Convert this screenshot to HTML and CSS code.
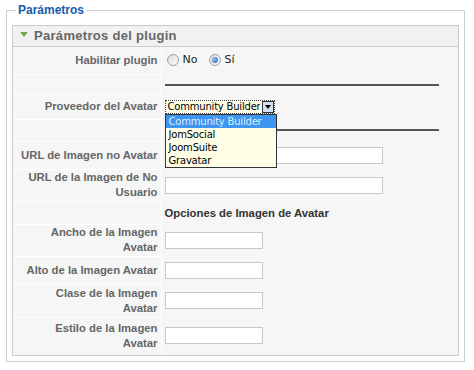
FILE: index.html
```html
<!DOCTYPE html>
<html lang="es">
<head>
  <meta charset="UTF-8" />
  <title>Parámetros</title>
  <link rel="stylesheet" href="styles.css">
</head>
<body>

  <!-- Parametros -->
  <fieldset class="params">
    <legend>Parámetros</legend>

    <div class="panel">
      <h3 class="panel-title"><span class="arrow"></span>Parámetros del plugin</h3>

      <table class="paramlist">
        <tr class="r1">
          <td class="key">Habilitar plugin</td>
          <td class="val">
            <label class="radio"><span class="dot"></span>No</label>
            <label class="radio"><span class="dot on"></span>Sí</label>
          </td>
        </tr>
        <tr class="r2">
          <td class="key"></td>
          <td class="val"><div class="rule"></div></td>
        </tr>
        <tr class="r3">
          <td class="key">Proveedor del Avatar</td>
          <td class="val">
            <div class="combo">
              <div class="combo-box">
                <span class="combo-text">Community Builder</span>
                <span class="combo-btn"></span>
              </div>
              <ul class="combo-list">
                <li class="sel">Community Builder</li>
                <li>JomSocial</li>
                <li>JoomSuite</li>
                <li>Gravatar</li>
              </ul>
            </div>
          </td>
        </tr>
        <tr class="r4">
          <td class="key"></td>
          <td class="val"><div class="rule"></div></td>
        </tr>
        <tr class="r5">
          <td class="key">URL de Imagen no Avatar</td>
          <td class="val"><input type="text" class="text wide" /></td>
        </tr>
        <tr class="r6">
          <td class="key">URL de la Imagen de No Usuario</td>
          <td class="val"><input type="text" class="text wide" /></td>
        </tr>
        <tr class="r7">
          <td class="key"></td>
          <td class="val"><b class="subhead">Opciones de Imagen de Avatar</b></td>
        </tr>
        <tr class="r8">
          <td class="key">Ancho de la Imagen Avatar</td>
          <td class="val"><input type="text" class="text short" /></td>
        </tr>
        <tr class="r9">
          <td class="key">Alto de la Imagen Avatar</td>
          <td class="val"><input type="text" class="text short" /></td>
        </tr>
        <tr class="r10">
          <td class="key">Clase de la Imagen Avatar</td>
          <td class="val"><input type="text" class="text short" /></td>
        </tr>
        <tr class="r11">
          <td class="key">Estilo de la Imagen Avatar</td>
          <td class="val"><input type="text" class="text short" /></td>
        </tr>
      </table>
    </div>
  </fieldset>

</body>
</html>
```

FILE: styles.css
```css
* {
  box-sizing: border-box;
}

body {
  margin: 0;
  background: #fff;
  font-family: "Liberation Sans", Arial, sans-serif;
  font-size: 11px;
  color: #666;
}

/* outer fieldset */
.params {
  margin: 3px 0 0 6px;
  width: 459px;
  height: 359px;
  border: 1px solid #ccc;
  padding: 11px 5px 8px 5px;
  position: relative;
}

.params legend {
  color: #135cae;
  font-weight: bold;
  font-size: 12px;
  padding: 0 2px;
  margin-left: 4px;
  line-height: 14px;
}

/* panel */
.panel {
  border: 1px solid #ccc;
  background: #f6f6f6;
  width: 447px;
  height: 331px;
  margin-top: -3px;
}

.panel-title {
  margin: 0;
  height: 21px;
  line-height: 20px;
  border-bottom: 1px solid #ccc;
  background: #f1f1f1;
  font-size: 13px;
  font-weight: bold;
  color: #666;
  padding-left: 7px;
  letter-spacing: 0.3px;
}

.arrow {
  display: inline-block;
  width: 0;
  height: 0;
  border-left: 4px solid transparent;
  border-right: 4px solid transparent;
  border-top: 5px solid #78a44c;
  margin-right: 6px;
  vertical-align: 3px;
}

/* table */
.paramlist {
  border-collapse: collapse;
  width: 100%;
}

.paramlist td {
  padding: 0;
}

.paramlist td.key {
  width: 148px;
  text-align: right;
  font-weight: bold;
  font-size: 11.3px;
  color: #666;
  padding-right: 3px;
  padding-left: 8px;
  border-bottom: 1px solid #fff;
  border-right: 1px solid #fff;
  line-height: 15px;
  vertical-align: middle;
}

.paramlist td.val {
  padding-left: 3px;
  vertical-align: middle;
}

.r1 { height: 27px; }
.r2 { height: 20px; }
.r3 { height: 25px; }
.r4 { height: 22px; }
.r5 { height: 28px; }
.r6 { height: 32px; }
.r7 { height: 23px; }
.r8 { height: 32px; }
.r9 { height: 28px; }
.r10 { height: 33px; }
.r11 { height: 37px; }
.r11 td.key { border-bottom: none; }

/* radios */
.radio {
  display: inline-flex;
  align-items: center;
  gap: 4px;
  color: #222;
  font-family: Tahoma, "DejaVu Sans", sans-serif;
  font-size: 11px;
  margin-right: 6px;
  margin-left: 2px;
}

.dot {
  width: 12px;
  height: 12px;
  border-radius: 50%;
  border: 1px solid #9aa3ad;
  background: linear-gradient(135deg, #dcdcdc, #fbfbfb);
  position: relative;
}

.dot.on::after {
  content: "";
  position: absolute;
  left: 2px;
  top: 2px;
  width: 6px;
  height: 6px;
  border-radius: 50%;
  background: radial-gradient(circle at 35% 35%, #8fc2f0, #2163a8);
}

.rule {
  height: 2px;
  width: 274px;
  background: #555;
  margin-top: 1px;
}

.r4 .rule {
  margin-top: -1px;
}

/* combo box */
.combo {
  position: relative;
  width: 110px;
  height: 14px;
}

.combo-box {
  display: flex;
  height: 14px;
  border: 1px dotted #444;
  background: #ffffe8;
}

.combo-text {
  flex: 1;
  font-family: Tahoma, "DejaVu Sans", sans-serif;
  font-size: 10px;
  color: #000;
  line-height: 12px;
  padding-left: 2px;
  letter-spacing: -0.2px;
  white-space: nowrap;
  overflow: hidden;
}

.combo-btn {
  width: 12px;
  height: 12px;
  border: 1px solid #333;
  background: #cfe0f4;
  position: relative;
  margin-left: 2px;
}

.combo-btn::after {
  content: "";
  position: absolute;
  left: 2px;
  top: 3px;
  border-left: 3px solid transparent;
  border-right: 3px solid transparent;
  border-top: 4px solid #000;
}

.combo-list {
  position: absolute;
  left: 0;
  top: 14px;
  width: 112px;
  margin: 0;
  padding: 0;
  list-style: none;
  border: 1px solid #333;
  background: #ffffe8;
  z-index: 2;
  font-family: Tahoma, "DejaVu Sans", sans-serif;
  font-size: 10px;
  color: #000;
}

.combo-list li {
  height: 13px;
  line-height: 13px;
  padding-left: 3px;
  letter-spacing: -0.2px;
}

.combo-list li.sel {
  background: #3d95f0;
  color: #dbeeff;
}

/* inputs */
input.text {
  height: 17px;
  border: 1px solid #c8c8c8;
  background: #fff;
  padding: 0 2px;
  font-size: 11px;
  display: block;
}

input.wide { width: 218px; }
input.short { width: 98px; }

.subhead {
  color: #333;
  font-size: 11.3px;
}
```
